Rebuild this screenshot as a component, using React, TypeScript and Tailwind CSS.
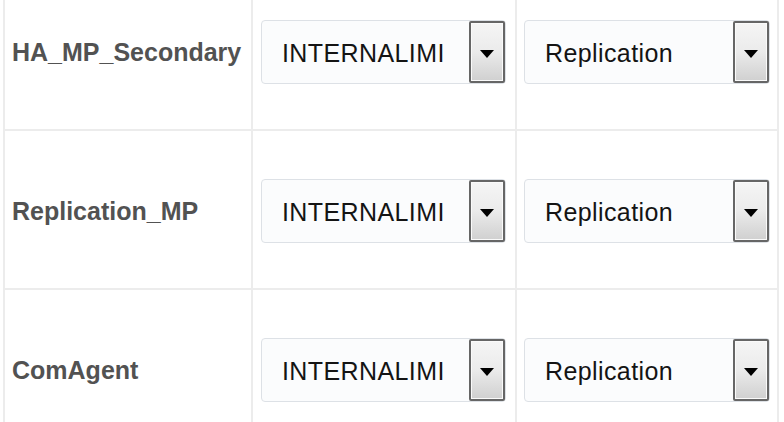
import React from 'react';

const ROWS = [
  { name: 'HA_MP_Secondary', iface: 'INTERNALIMI', mode: 'Replication' },
  { name: 'Replication_MP', iface: 'INTERNALIMI', mode: 'Replication' },
  { name: 'ComAgent', iface: 'INTERNALIMI', mode: 'Replication' },
];

const FONT = { fontFamily: '"Liberation Sans", Arial, sans-serif' };

const SelectBox: React.FC<{ value: string; width: string }> = ({ value, width }) => (
  <div
    className={`${width} h-[64px] flex items-center justify-between rounded-[4px] border border-[#dde1e6] bg-[#fbfcfd] pl-[20px] pr-0`}
  >
    <span className="text-[25px] leading-none text-[#141414] tracking-[0.4px] pt-[3px]">{value}</span>
    <div className="w-[36px] h-[62px] flex justify-center pt-[27px] border-2 border-[#666] rounded-[2px] bg-linear-to-b from-[#f5f5f5] via-[#ebebeb] to-[#d0d0d0] shadow-[inset_0_0_0_1px_#fafafa]">
      {/* arrow */}
      <div className="w-0 h-0 border-l-[7px] border-r-[7px] border-t-[8px] border-l-transparent border-r-transparent border-t-black" />
    </div>
  </div>
);

export default function App() {
  return (
    <div className="w-[784px] h-[422px] overflow-hidden bg-white" style={FONT}>
      <div className="ml-[3px] mt-[-28px] w-[776px] border-l-2 border-[#ececec]">
        {ROWS.map((r) => (
          <div key={r.name} className="flex h-[159px] border-b-2 border-[#ececec]">
            <div className="w-[248px] flex items-center pl-[7px] pt-[4px] border-r-2 border-[#ececec]">
              <span className="text-[25px] font-bold text-[#525252]">{r.name}</span>
            </div>
            <div className="w-[264px] flex items-center pl-[8px] pt-[2px] border-r-2 border-[#ececec]">
              <SelectBox value={r.iface} width="w-[245px]" />
            </div>
            <div className="w-[262px] flex items-center pl-[7px] pt-[2px] border-r-2 border-[#ececec]">
              <SelectBox value={r.mode} width="w-[246px]" />
            </div>
          </div>
        ))}
      </div>
    </div>
  );
}
